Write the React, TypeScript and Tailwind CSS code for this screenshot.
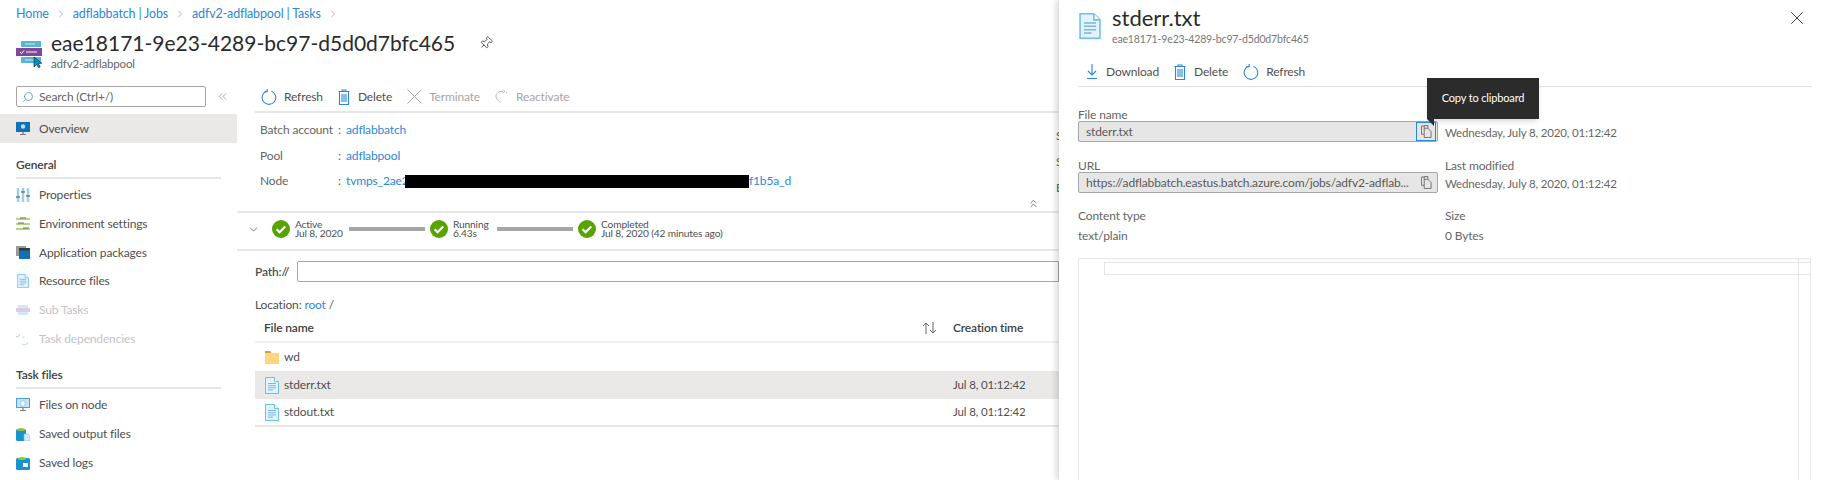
import { ChevronDown, ChevronRight, ChevronsLeft, ChevronsUp, Pin, Search, X } from "lucide-react";
import type { ReactNode } from "react";

const font = { fontFamily: 'Lato, "Open Sans", "Liberation Sans", sans-serif' };

const RefreshIcon = ({ className = "" }: { className?: string }) => (
  <svg viewBox="0 0 16 16" className={className} fill="none" stroke="#2b88d8" strokeWidth="1.1">
    <path d="M5.8 2.1a6.8 6.8 0 1 0 4.6 .1" />
    <path d="M6.2 0v2.6H3.6" />
  </svg>
);

const TrashIcon = ({ className = "" }: { className?: string }) => (
  <svg viewBox="0 0 12 16" className={className} fill="none" stroke="#2b88d8" strokeWidth="1.1">
    <path d="M.5 2.5h11M4 2.5V1h4v1.5M1.5 2.5h9v13h-9z" />
    <path d="M4 5v8M6 5v8M8 5v8" />
  </svg>
);

const CloseGray = () => (
  <svg viewBox="0 0 15 15" className="w-[15px] h-[15px]" fill="none" stroke="#a6a6a6" strokeWidth="1">
    <path d="M.5.5l14 14M14.5.5l-14 14" />
  </svg>
);

const ReactivateIcon = () => (
  <svg viewBox="0 0 13 15" className="w-[13px] h-[15px]" fill="none" stroke="#b5b5b5" strokeWidth="1">
    <path d="M8 2.5C3.5 2 .8 5 1 7.5c.2 2.5 2.4 4.5 4.5 6" />
    <path d="M8 .5l2 2-2.4 1.6M11 3.5l1 .5" />
  </svg>
);

const SortIcon = () => (
  <svg viewBox="0 0 15 12" className="w-[15px] h-[12px]" fill="none" stroke="#666666" strokeWidth="1">
    <path d="M4 12V1M1 4l3-3 3 3" />
    <path d="M11 0v11M8 8l3 3 3-3" />
  </svg>
);

const FileIcon = ({ className = "" }: { className?: string }) => (
  <svg viewBox="0 0 14 17" className={className}>
    <path d="M.5.5h9l4 4v12H.5z" fill="#e3f2fb" stroke="#6cc0ea" />
    <path d="M9.5.5v4h4" fill="#ffffff" stroke="#6cc0ea" />
    <path d="M3 6.5h8M3 8.7h8M3 10.9h8M3 13.1h5" stroke="#7ab8dc" strokeWidth="1" />
  </svg>
);

const FolderIcon = () => (
  <svg viewBox="0 0 14 14" className="w-[14px] h-[14px]">
    <path d="M0 1h5l1.5 2H14v11H0z" fill="#ffd680" />
    <path d="M0 1h5l1.5 2H0z" fill="#c8a14a" />
  </svg>
);

const CheckBadge = () => (
  <svg viewBox="0 0 18 18" className="w-[18px] h-[18px] shrink-0">
    <circle cx="9" cy="9" r="9" fill="#57a300" />
    <path d="M4.6 9.2l3 3 5.6-5.8" fill="none" stroke="#ffffff" strokeWidth="2.2" />
  </svg>
);

const CopyIcon = ({ color = "#6b6b6b" }: { color?: string }) => (
  <svg viewBox="0 0 12 14" className="w-[11px] h-[13px]" fill="none" stroke={color} strokeWidth="1">
    <path d="M3.5 3.5V.5h4l.01 3M.5 1h3M.5 1v9h3" />
    <path d="M3.5 3.5h4l3.5 3.5v6.5H3.5z" fill="#e6e6e6" />
  </svg>
);

const BatchIcon = () => (
  <svg viewBox="0 0 27 28" className="w-[27px] h-[28px]">
    <rect x="5" y="1" width="20" height="6" fill="#59b4d9" />
    <rect x="5" y="17" width="20" height="6" fill="#59b4d9" />
    <rect x="0" y="8" width="26" height="8" fill="#804998" />
    <path d="M4 12l1.5 1.5L8 10.5" fill="none" stroke="#ffffff" strokeWidth="1" />
    <path d="M10 12h11" stroke="#d8c5e0" strokeWidth="1.4" />
    <path d="M9 4h10M9 20h10" stroke="#c9e8f4" strokeWidth="1.2" />
    <path d="M18 17l0 10 2.6-2.4 2 3.2 1.6-1-1.8-3.2 3.4-.4z" fill="#0d8fc9" stroke="#1a1a1a" strokeWidth=".6" />
  </svg>
);

const NavIcon = ({ name }: { name: string }) => {
  const common = "w-[14px] h-[14px] shrink-0";
  switch (name) {
    case "props":
      return (
        <svg viewBox="0 0 14 14" className={common}>
          <path d="M2 0v14M7 0v14M12 0v14" stroke="#9ccfe8" strokeWidth="2.4" />
          <path d="M0 9h4M5 4h4M10 8h4" stroke="#7a7a7a" strokeWidth="1.4" />
        </svg>
      );
    case "env":
      return (
        <svg viewBox="0 0 14 14" className={common}>
          <path d="M0 2h14M0 7h14M0 12h14" stroke="#5db300" strokeWidth="1.2" />
          <path d="M4 1h6M2 6h6M7 11h6" stroke="#6b6b6b" strokeWidth="1" />
        </svg>
      );
    case "app":
      return (
        <svg viewBox="0 0 14 14" className={common}>
          <rect x="0" y="0" width="10" height="10" fill="#9a9a9a" />
          <rect x="3" y="2" width="11" height="11" fill="#0f6fb8" />
          <rect x="3" y="2" width="11" height="2.5" fill="#3a3a3a" />
        </svg>
      );
    case "res":
      return <FileIcon className={common} />;
    case "sub":
      return (
        <svg viewBox="0 0 14 14" className={common}>
          <rect x="2" y="2" width="10" height="3" fill="#b7dcee" />
          <rect x="0" y="5" width="14" height="4" fill="#c9a9d8" />
          <rect x="2" y="9" width="10" height="3" fill="#b7dcee" />
        </svg>
      );
    case "dep":
      return (
        <svg viewBox="0 0 14 14" className={common} fill="none">
          <path d="M0 4l1.5 1.5L4 2" stroke="#9a9a9a" />
          <path d="M6 5h3" stroke="#c4c4c4" />
          <path d="M6 12c2 1 5 1 6-2" stroke="#9ccfe8" strokeWidth="1.2" />
        </svg>
      );
    case "node":
      return (
        <svg viewBox="0 0 14 14" className={common}>
          <rect x="0" y="0" width="14" height="10" fill="#4d9fd2" />
          <rect x="1" y="1" width="12" height="8" fill="#c8e4f3" />
          <rect x="5" y="3" width="4" height="5" fill="#ffffff" stroke="#6cc0ea" strokeWidth=".6" />
          <path d="M4 12.5h6M7 10v2" stroke="#7a7a7a" strokeWidth="1.2" />
        </svg>
      );
    case "out":
      return (
        <svg viewBox="0 0 14 14" className={common}>
          <rect x="0" y="2" width="10" height="12" rx="1.5" fill="#1b93d1" />
          <ellipse cx="5" cy="2.5" rx="4" ry="1.6" fill="#8cc63f" />
          <path d="M8 7h4l2 2v5H8z" fill="#d6ecf8" stroke="#6cc0ea" strokeWidth=".6" />
        </svg>
      );
    default:
      return (
        <svg viewBox="0 0 14 14" className={common}>
          <rect x="0" y="2" width="14" height="12" rx="1.5" fill="#1b93d1" />
          <ellipse cx="6" cy="2.5" rx="4" ry="1.6" fill="#8cc63f" />
          <rect x="7" y="7" width="5" height="4" fill="#ffffff" />
        </svg>
      );
  }
};

const NavItem = ({ icon, label, muted }: { icon: string; label: string; muted?: boolean }) => (
  <div className={`h-[28.7px] flex items-center pl-[16px] gap-[9px] text-[12px] ${muted ? "opacity-60" : "text-[#505050]"}`}>
    <NavIcon name={icon} />
    <span className={muted ? "text-[#9a9a9a]" : ""}>{label}</span>
  </div>
);

const NavHeading = ({ children }: { children: ReactNode }) => (
  <div className="h-[36px] mx-[16px] flex items-end pb-[4px] border-b-2 border-[#e6e6e6] text-[12px] leading-[16px] font-semibold text-[#404040] mb-[2px]">
    {children}
  </div>
);

const Detail = ({ label, children }: { label: string; children: ReactNode }) => (
  <div className="h-[25.7px] flex items-center text-[12px] pl-[23px] text-[#666666] whitespace-nowrap">
    <span className="w-[78px]">{label}</span>
    <span className="w-[8px]">:</span>
    {children}
  </div>
);

const Status = ({ title, sub, width }: { title: string; sub: string; width: string }) => (
  <div className={`flex items-center gap-[5px] shrink-0 ${width}`}>
    <CheckBadge />
    <div className="text-[10.2px] leading-[9.5px] text-[#505050] whitespace-nowrap">
      <div>{title}</div>
      <div>{sub}</div>
    </div>
  </div>
);

const FileRow = ({ icon, name, time, selected, last }: { icon: ReactNode; name: string; time?: string; selected?: boolean; last?: boolean }) => (
  <div className={`h-[28px] flex items-center pl-[10px] text-[12px] text-[#505050] ${selected ? "bg-[#ebe9e7]" : ""} ${last ? "border-b-2 border-[#e6e6e6]" : ""}`}>
    <div className="w-[688px] flex items-center gap-[5px]">
      {icon}
      {name}
    </div>
    <span className="whitespace-nowrap text-[11.5px]">{time}</span>
  </div>
);

const Field = ({ label, value, focused }: { label: string; value: string; focused?: boolean }) => (
  <div>
    <div className="h-[15px] text-[12px] leading-[17px] text-[#666666]">{label}</div>
    <div className="h-[21px] flex items-center pl-[7px] pr-[1px] bg-[#e6e6e6] border border-[#a6a6a6] rounded-[2px] text-[12px] text-[#5a5a5a]">
      <span className="flex-1 whitespace-nowrap">{value}</span>
      <div className={`w-[20px] h-[19px] shrink-0 flex items-center justify-center ${focused ? "border border-[#2b88d8]" : ""}`}>
        <CopyIcon />
      </div>
    </div>
  </div>
);

const ToolButton = ({ icon, label, muted, gap }: { icon: ReactNode; label: string; muted?: boolean; gap: string }) => (
  <div className={`flex items-center text-[12px] ${gap} ${muted ? "text-[#a6a6a6]" : "text-[#505050]"}`}>
    {icon}
    {label}
  </div>
);

export default function App() {
  return (
    <div className="flex w-[1823px] h-[480px] overflow-hidden bg-white tracking-[-0.15px]" style={font}>
      {/* Page behind the blade */}
      <div className="w-[1059px] shrink-0 overflow-hidden">
        <div className="h-[28px] pl-[16px] flex items-center gap-[6px] text-[12.5px] text-[#2b88d8] whitespace-nowrap">
          <span>Home</span>
          <ChevronRight size={12} strokeWidth={1.1} className="text-[#777777]" />
          <span>adflabbatch | Jobs</span>
          <ChevronRight size={12} strokeWidth={1.1} className="text-[#777777]" />
          <span>adfv2-adflabpool | Tasks</span>
          <ChevronRight size={12} strokeWidth={1.1} className="text-[#777777]" />
        </div>
        <div className="h-[52px] flex pl-[16px]">
          <div className="pt-[12px] w-[35px] shrink-0">
            <BatchIcon />
          </div>
          <div>
            <div className="flex items-center h-[30px]">
              <span className="text-[21px] leading-[30px] tracking-normal text-[#2b2b2b] whitespace-nowrap">eae18171-9e23-4289-bc97-d5d0d7bfc465</span>
              <Pin size={14} strokeWidth={1.3} className="rotate-45 ml-[24px] text-[#333333]" />
            </div>
            <div className="text-[11.5px] leading-[14px] -mt-[1px] text-[#666666]">adfv2-adflabpool</div>
          </div>
        </div>

        <div className="flex h-[400px]">
          {/* Sidebar */}
          <div className="w-[237px] shrink-0">
            <div className="flex items-center mt-[6px] pl-[16px]">
              <div className="w-[190px] h-[21px] border border-[#a6a6a6] rounded-[2px] flex items-center pl-[5px] gap-[5px] text-[12px] text-[#666666]">
                <Search size={12} strokeWidth={1.4} className="-scale-x-100 text-[#2b88d8]" />
                Search (Ctrl+/)
              </div>
              <ChevronsLeft size={13} strokeWidth={1.1} className="ml-[10px] text-[#777777]" />
            </div>
            <div className="mt-[7px] h-[29px] bg-[#ebe9e7] flex items-center pl-[16px] gap-[9px] text-[12px] text-[#505050]">
              <svg viewBox="0 0 14 14" className="w-[14px] h-[14px] shrink-0">
                <rect x="0" y="0" width="14" height="10" fill="#0f6fb8" />
                <circle cx="7" cy="4.5" r="2.2" fill="#b7e3f7" />
                <path d="M4 12.5h6M7 10v2" stroke="#7a7a7a" strokeWidth="1.2" />
              </svg>
              Overview
            </div>
            <NavHeading>General</NavHeading>
            <NavItem icon="props" label="Properties" />
            <NavItem icon="env" label="Environment settings" />
            <NavItem icon="app" label="Application packages" />
            <NavItem icon="res" label="Resource files" />
            <NavItem icon="sub" label="Sub Tasks" muted />
            <NavItem icon="dep" label="Task dependencies" muted />
            <NavHeading>Task files</NavHeading>
            <NavItem icon="node" label="Files on node" />
            <NavItem icon="out" label="Saved output files" />
            <NavItem icon="logs" label="Saved logs" />
          </div>

          {/* Main content */}
          <div className="flex-1 min-w-0">
            <div className="ml-[18px] h-[33px] pt-[2px] pl-[6px] flex items-center gap-[15px] border-b-2 border-[#e6e6e6]">
              <ToolButton gap="gap-[7px]" icon={<RefreshIcon className="w-[16px] h-[16px]" />} label="Refresh" />
              <ToolButton gap="gap-[8px]" icon={<TrashIcon className="w-[12px] h-[16px]" />} label="Delete" />
              <ToolButton gap="gap-[7px]" icon={<CloseGray />} label="Terminate" muted />
              <ToolButton gap="gap-[8px]" icon={<ReactivateIcon />} label="Reactivate" muted />
            </div>
            <div className="relative h-[100px] pt-[4px] border-b-2 border-[#e6e6e6]">
              <Detail label="Batch account">
                <span className="text-[#2b88d8]">adflabbatch</span>
              </Detail>
              <Detail label="Pool">
                <span className="text-[#2b88d8]">adflabpool</span>
              </Detail>
              <Detail label="Node">
                <span className="text-[#2b88d8] w-[59px]">tvmps_2ae2</span>
                <span className="block w-[344px] h-[13px] bg-black shrink-0" />
                <span className="text-[#2b88d8]">f1b5a_d</span>
              </Detail>
              <ChevronsUp size={13} strokeWidth={1.3} className="absolute right-[19px] bottom-[1px] text-[#444444]" />
              <div className="absolute left-[819px] top-[10px] text-[12px] text-[#666666] leading-[26px]">
                <div>S</div>
                <div>S</div>
                <div>E</div>
              </div>
            </div>
            <div className="h-[38px] pb-[4px] pl-[10px] flex items-center border-b-2 border-[#e6e6e6] whitespace-nowrap">
              <ChevronDown size={13} strokeWidth={1.3} className="text-[#444444] shrink-0" />
              <div className="ml-[12px] flex items-center">
                <Status title="Active" sub="Jul 8, 2020" width="w-[77px]" />
                <div className="w-[76px] h-[4px] bg-[#a6a6a6] mr-[5px]" />
                <Status title="Running" sub="6.43s" width="w-[67px]" />
                <div className="w-[76px] h-[4px] bg-[#a6a6a6] mr-[5px]" />
                <Status title="Completed" sub="Jul 8, 2020 (42 minutes ago)" width="w-[150px]" />
              </div>
            </div>

            <div className="pl-[18px]">
              <div className="mt-[10px] flex items-center">
                <span className="w-[42px] text-[12px] font-semibold text-[#505050]">Path://</span>
                <div className="flex-1 h-[21px] border border-[#a6a6a6] rounded-l-[2px]" />
              </div>
              <div className="mt-[15px] h-[16px] text-[12px] leading-[16px] text-[#505050]">
                Location: <span className="text-[#2b88d8]">root</span> /
              </div>
              <div className="mt-[2px] h-[28px] flex items-center pl-[9px] text-[12px] font-semibold text-[#404040] border-b-2 border-[#f0f0f0]">
                <div className="w-[689px] flex items-center justify-between pr-[16px]">
                  File name
                  <SortIcon />
                </div>
                <span className="whitespace-nowrap">Creation time</span>
              </div>
              <FileRow icon={<FolderIcon />} name="wd" />
              <FileRow icon={<FileIcon className="w-[14px] h-[17px]" />} name="stderr.txt" time="Jul 8, 01:12:42" selected />
              <FileRow icon={<FileIcon className="w-[14px] h-[17px]" />} name="stdout.txt" time="Jul 8, 01:12:42" last />
            </div>
          </div>
        </div>
      </div>

      {/* File blade */}
      <div className="relative flex-1 min-w-0 bg-white shadow-[-3px_0_6px_rgba(0,0,0,0.15)]">
        <div className="flex pl-[20px] pr-[20px] h-[58px]">
          <FileIcon className="mt-[13px] w-[22px] h-[26px]" />
          <div className="ml-[11px] flex-1">
            <div className="mt-[4px] text-[22px] leading-[28px] tracking-normal text-[#2b2b2b]">stderr.txt</div>
            <div className="text-[10.5px] leading-[14px] text-[#777777]">eae18171-9e23-4289-bc97-d5d0d7bfc465</div>
          </div>
          <X size={22} strokeWidth={1} className="mt-[7px] -mr-[5px] text-[#333333]" />
        </div>
        <div className="ml-[19px] mr-[11px] h-[29px] pl-[9px] pb-[1px] flex items-center gap-[15px] border-b border-[#e0e0e0]">
          <ToolButton
            gap="gap-[9px]"
            icon={
              <svg viewBox="0 0 10 15" className="w-[10px] h-[15px]" fill="none" stroke="#2b88d8" strokeWidth="1.1">
                <path d="M5 0v11M1 7l4 4 4-4M0 14.5h10" />
              </svg>
            }
            label="Download"
          />
          <ToolButton gap="gap-[8px]" icon={<TrashIcon className="w-[12px] h-[16px]" />} label="Delete" />
          <ToolButton gap="gap-[7px]" icon={<RefreshIcon className="w-[16px] h-[16px]" />} label="Refresh" />
        </div>

        <div className="ml-[19px] mr-[12px] mt-[19px] grid grid-cols-[360px_1fr] gap-x-[7px] gap-y-[15px] text-[#666666]">
          <Field label="File name" value="stderr.txt" focused />
          <div className="pt-[17px] h-[36px] flex items-center text-[11.5px] whitespace-nowrap">Wednesday, July 8, 2020, 01:12:42</div>
          <Field label="URL" value="https://adflabbatch.eastus.batch.azure.com/jobs/adfv2-adflab..." />
          <div className="text-[12px]">
            <div className="h-[15px] leading-[17px]">Last modified</div>
            <div className="h-[21px] pt-[2px] flex items-center text-[11.5px] whitespace-nowrap">Wednesday, July 8, 2020, 01:12:42</div>
          </div>
          <div className="text-[12px]">
            <div className="leading-[16px] h-[16px]">Content type</div>
            <div className="leading-[16px] mt-[4px]">text/plain</div>
          </div>
          <div className="text-[12px]">
            <div className="leading-[16px] h-[16px]">Size</div>
            <div className="leading-[16px] mt-[4px]">0 Bytes</div>
          </div>
        </div>

        <div className="relative ml-[19px] mr-[12px] mt-[14px] h-[240px] border border-[#e6e6e6]">
          <div className="ml-[25px] mt-[3px] h-[13px] border-y border-l border-[#e6e6e6]" />
          <div className="absolute top-0 bottom-0 right-[11px] w-px bg-[#e6e6e6]" />
        </div>

        {/* Tooltip over the copy button */}
        <div className="absolute left-[368px] top-[78px] w-[112px] h-[41px] bg-[#2b2b2b] text-white text-[11px] flex items-center justify-center shadow-md">
          Copy to clipboard
          <div className="absolute left-0 top-[41px] w-0 h-0 border-t-[7px] border-t-[#2b2b2b] border-l-[7px] border-l-transparent border-r-0" />
        </div>
      </div>
    </div>
  );
}
